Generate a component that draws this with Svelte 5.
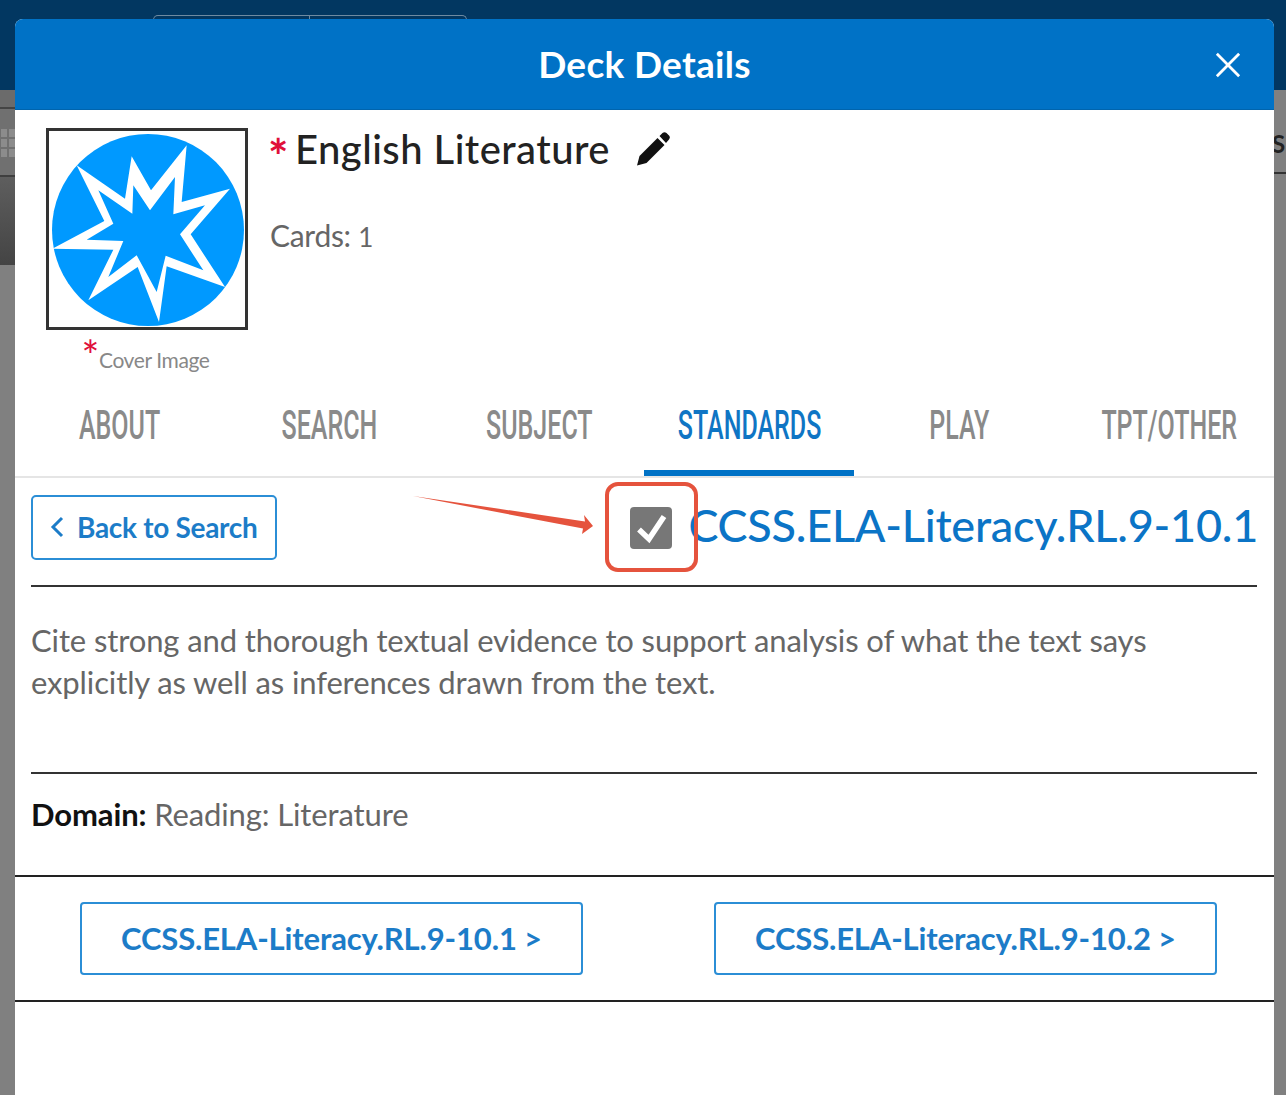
<script>
  const tabs = ['ABOUT', 'SEARCH', 'SUBJECT', 'STANDARDS', 'PLAY', 'TPT/OTHER'];
  const links = ['CCSS.ELA-Literacy.RL.9-10.1 >', 'CCSS.ELA-Literacy.RL.9-10.2 >'];
  const outer = '22,365 178,282 95,115 240,215 260,88 318,190 425,55 410,225 555,185 437,322 540,480 365,418 342,585 278,420 130,520 205,368';
  const inner = '125,338 205,290 160,190 262,260 265,175 315,250 390,150 385,262 480,235 405,322 475,430 362,386 335,495 275,385 190,450 235,342';
</script>

<div class="page">
  <div class="topbar"><div class="backtabs"><span></span><span></span></div></div>
  <div class="under">
    <div class="strip left">
      <div class="s1"></div>
      <div class="s2"><div class="grid"><i></i><i></i><i></i><i></i><i></i><i></i></div></div>
      <div class="s3"></div>
    </div>
    <div class="strip right">
      <div class="r1"><b>SI</b></div>
    </div>
  </div>

  <section class="modal">
    <header class="head">
      <h1>Deck Details</h1>
      <svg class="close" viewBox="0 0 28 28" aria-label="Close"><path d="M2 2 26 26M26 2 2 26" stroke="#fff" stroke-width="3" fill="none"/></svg>
    </header>

    <div class="intro">
      <div class="cover">
        <div class="box">
          <svg viewBox="12 12 588 588">
            <circle cx="309" cy="309" r="288" fill="#0099ff"/>
            <polygon points={outer} fill="#fff"/>
            <polygon points={inner} fill="#0099ff"/>
          </svg>
        </div>
        <div class="caption"><span class="cstar">*</span>Cover Image</div>
      </div>
      <div class="meta">
        <div class="title">
          <span class="tstar">*</span>
          <span class="name">English Literature</span>
          <svg class="pencil" viewBox="0 0 36 36"><path d="M2 34.500 4.500 25 22.500 7 29.500 14 11.500 32Z M24.500 5 27.500 2Q29.500 .5 31.500 2L34.500 5Q35.500 6.500 34 8.500L31 12Z" fill="#111"/></svg>
        </div>
        <div class="cards">Cards: <small>1</small></div>
      </div>
    </div>

    <nav class="tabs">
      {#each tabs as t, i}
        <div class="tab" class:active={i === 3}><span>{t}</span></div>
      {/each}
    </nav>

    <div class="stdrow">
      <div class="back">
        <svg viewBox="0 0 14 22"><path d="M12 2 3 11 12 20" fill="none" stroke="#1c7cc8" stroke-width="3"/></svg>
        Back to Search
      </div>
      <div class="stdtitle">
        <span class="check">
          <svg viewBox="0 0 42 42"><path d="M9 22.500 19 32 34 9.500" fill="none" stroke="#fff" stroke-width="5.500"/></svg>
        </span>
        <span class="code">CCSS.ELA-Literacy.RL.9-10.1</span>
      </div>
    </div>

    <p class="desc">Cite strong and thorough textual evidence to support analysis of what the text says explicitly as well as inferences drawn from the text.</p>

    <p class="domain"><b>Domain:</b> Reading: Literature</p>

    <div class="links">
      {#each links as l}
        <div class="link"><span>{l}</span></div>
      {/each}
    </div>
  </section>

  <div class="mark"></div>
  <svg class="arrow" viewBox="0 0 190 50"><polygon points="1,1 173,26.500 172,20 181,31 170,39 171,33.500" fill="#e5533d"/></svg>
</div>

<style>
  :global(body) { margin: 0; background: #808080; }
  .page { position: relative; width: 1286px; height: 1095px; overflow: hidden; background: #808080; font-family: Lato, "Open Sans", sans-serif; }
  .topbar { height: 90px; background: #023761; position: relative; }
  .backtabs { display: flex; margin-left: 153px; padding-top: 15px; }
  .backtabs span { width: 157px; height: 10px; border: 1px solid #6f8aa0; border-bottom: 0; border-radius: 5px 0 0 0; box-sizing: border-box; }
  .backtabs span + span { border-radius: 0 5px 0 0; border-left: 0; }
  .under { display: flex; justify-content: space-between; }
  .strip { display: flex; flex-direction: column; }
  .left { width: 15px; }
  .s1 { height: 17px; background: #6b6b6b; border-bottom: 2px solid #444; }
  .s2 { height: 68px; background: #707070; border-bottom: 2px solid #3f3f3f; padding-top: 20px; box-sizing: border-box; }
  .grid { display: grid; grid-template-columns: repeat(2, 6px); grid-auto-rows: 8px; gap: 2px; padding: 0 1px; }
  .grid i { background: #8c8c8c; }
  .s3 { height: 88px; background: linear-gradient(#5e5e5e, #444); }
  .right { width: 12px; }
  .r1 { height: 82px; background: #808080; border-bottom: 2px solid #333; color: #222; overflow: hidden; }
  .r1 b { display: block; margin: 40px 0 0 -2px; font-size: 24px; line-height: 28px; }

  .modal { position: absolute; left: 15px; top: 19px; right: 12px; bottom: 0; background: #fff; border-radius: 8px 8px 0 0; overflow: hidden; }
  .head { height: 91px; background: #0072c6; display: flex; align-items: center; justify-content: center; position: relative; box-sizing: border-box; border-bottom: 1px solid #0064ad; }
  h1 { margin: 0 0 2px; color: #fff; font-size: 37px; font-weight: 700; letter-spacing: 0.3px; }
  .close { position: absolute; right: 33px; top: 33px; width: 26px; height: 26px; }

  .intro { height: 280px; display: flex; padding: 18px 0 0 31px; box-sizing: border-box; }
  .cover { width: 202px; display: flex; flex-direction: column; align-items: center; }
  .box { width: 202px; height: 202px; border: 3px solid #333; box-sizing: border-box; }
  .box svg { display: block; width: 100%; height: 100%; }
  .caption { font-size: 21px; color: #888; margin: 15px 3px 0 0; line-height: 30px; letter-spacing: -0.4px; position: relative; white-space: nowrap; }
  .cstar { color: #e0103a; font-size: 42px; line-height: 0; position: relative; top: 3px; }
  .meta { padding: 0 0 0 20px; }
  .title { display: flex; align-items: center; height: 44px; }
  .tstar { color: #e0103a; font-size: 48px; font-weight: 700; width: 27px; line-height: 44px; position: relative; top: 6px; }
  .name { font-size: 40px; color: #222; font-weight: 500; letter-spacing: 0.45px; position: relative; top: -1px; }
  .pencil { width: 36px; height: 36px; margin-left: 25px; margin-top: -2px; }
  .cards { margin-top: 43px; margin-left: 2px; font-size: 30px; color: #666; line-height: 40px; letter-spacing: -0.3px; }
  .cards small { font-size: 26px; }

  .tabs { display: flex; border-bottom: 2px solid #e5e5e5; }
  .tab { flex: 1; min-width: 0; height: 86px; box-sizing: border-box; display: flex; align-items: center; justify-content: center; padding-bottom: 16px; color: #8a8a8a; font-family: Roboto, "Liberation Sans", sans-serif; font-size: 41px; font-weight: 500; white-space: nowrap; }
  .tab.active { color: #0f75c4; border-bottom: 6px solid #0072c6; padding-bottom: 10px; }
  .tab span { display: block; transform: scaleX(0.61); }

  .stdrow { height: 109px; margin: 0 17px 0 16px; padding-top: 17px; box-sizing: border-box; border-bottom: 2px solid #333; display: flex; justify-content: space-between; }
  .back { width: 246px; height: 65px; box-sizing: border-box; border: 2px solid #2b8ed6; border-radius: 5px; display: flex; align-items: center; padding-left: 17px; gap: 13px; padding-bottom: 2px; font-size: 28px; font-weight: 700; color: #1c7cc8; letter-spacing: -0.3px; }
  .back svg { width: 14px; height: 22px; }
  .stdtitle { display: flex; align-items: flex-start; margin-right: -1px; }
  .check { width: 42px; height: 42px; background: #777; border-radius: 4px; margin: 12px 16px 0 0; flex: none; }
  .check svg { display: block; }
  .code { font-size: 45px; color: #0b74c6; font-weight: 500; letter-spacing: -0.24px; line-height: 60px; white-space: nowrap; }

  .desc { margin: 0 17px 0 16px; padding: 32px 0 0; height: 187px; box-sizing: border-box; border-bottom: 2px solid #333; font-size: 31px; line-height: 42px; color: #666; letter-spacing: -0.12px; }
  .domain { margin: 0; padding-left: 16px; height: 103px; box-sizing: border-box; padding-top: 19px; font-size: 31px; line-height: 42px; color: #666; border-bottom: 2px solid #222; letter-spacing: -0.12px; }
  .domain b { color: #111; }

  .links { display: flex; gap: 131px; padding: 25px 0 0 65px; height: 125px; box-sizing: border-box; border-bottom: 2px solid #222; }
  .link { width: 503px; height: 73px; box-sizing: border-box; border: 2px solid #2b8ed6; border-radius: 4px; padding-bottom: 2px; display: flex; align-items: center; justify-content: center; font-size: 31px; font-weight: 700; color: #1c7cc8; letter-spacing: -0.15px; }

  .mark { position: absolute; left: 605px; top: 482px; width: 93px; height: 90px; box-sizing: border-box; border: 4.500px solid #e5533d; border-radius: 13px; }
  .arrow { position: absolute; left: 412px; top: 495px; width: 190px; height: 50px; }
</style>
